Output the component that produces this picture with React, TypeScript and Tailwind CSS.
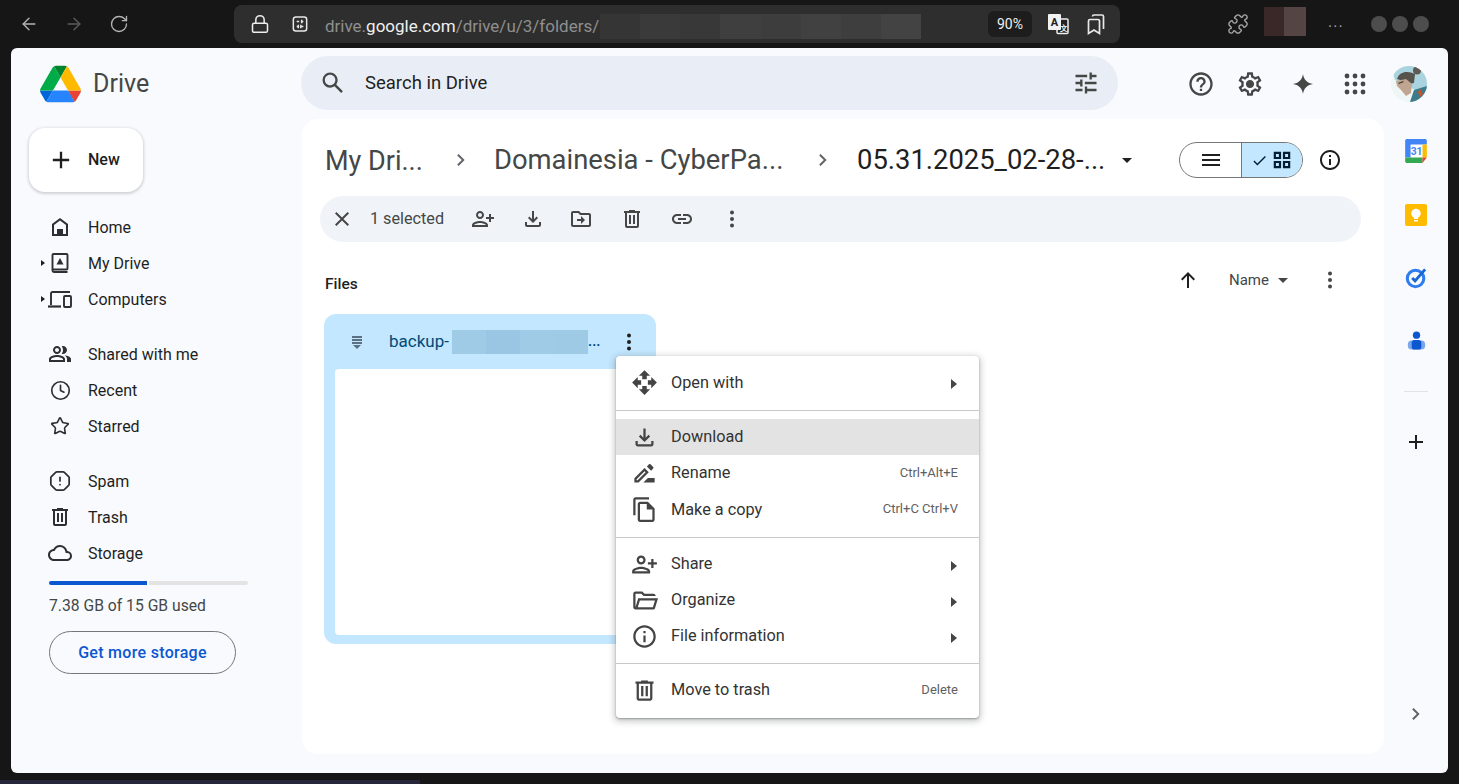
import type { ReactNode } from "react";
import { ArrowLeft, ArrowRight, Clock, Lock, OctagonAlert, Puzzle, RotateCw, Star } from "lucide-react";

const paths = {
  search: "M20.49 19l-5.73-5.73C15.53 12.2 16 10.91 16 9.5A6.5 6.5 0 1 0 9.5 16c1.41 0 2.7-.47 3.77-1.24L19 20.49 20.49 19zM5 9.5C5 7.01 7.01 5 9.5 5S14 7.01 14 9.5 11.99 14 9.5 14 5 11.99 5 9.5z",
  tune: "M3 17v2h6v-2H3zM3 5v2h10V5H3zm10 16v-2h8v-2h-8v-2h-2v6h2zM7 9v2H3v2h4v2h2V9H7zm14 4v-2H11v2h10zm-6-4h2V7h4V5h-4V3h-2v6z",
  help: "M11 18h2v-2h-2v2zm1-16C6.48 2 2 6.48 2 12s4.48 10 10 10 10-4.48 10-10S17.52 2 12 2zm0 18c-4.41 0-8-3.59-8-8s3.59-8 8-8 8 3.59 8 8-3.59 8-8 8zm0-14c-2.21 0-4 1.79-4 4h2c0-1.1.9-2 2-2s2 .9 2 2c0 2-3 1.75-3 5h2c0-2.25 3-2.5 3-5 0-2.21-1.79-4-4-4z",
  settings: "M19.43 12.98c.04-.32.07-.64.07-.98s-.03-.66-.07-.98l2.11-1.65c.19-.15.24-.42.12-.64l-2-3.46c-.12-.22-.39-.3-.61-.22l-2.49 1c-.52-.4-1.08-.73-1.69-.98l-.38-2.65C14.46 2.18 14.25 2 14 2h-4c-.25 0-.46.18-.49.42l-.38 2.65c-.61.25-1.17.59-1.69.98l-2.49-1c-.23-.09-.49 0-.61.22l-2 3.46c-.13.22-.07.49.12.64l2.11 1.65c-.04.32-.07.65-.07.98s.03.66.07.98l-2.11 1.65c-.19.15-.24.42-.12.64l2 3.46c.12.22.39.3.61.22l2.49-1c.52.4 1.08.73 1.69.98l.38 2.65c.03.24.24.42.49.42h4c.25 0 .46-.18.49-.42l.38-2.65c.61-.25 1.17-.59 1.69-.98l2.49 1c.23.09.49 0 .61-.22l2-3.46c.12-.22.07-.49-.12-.64l-2.11-1.65zm-1.98-1.71c.04.31.05.52.05.73 0 .21-.02.43-.05.73l-.14 1.13.89.7 1.08.84-.7 1.21-1.27-.51-1.04-.42-.9.68c-.43.32-.84.56-1.25.73l-1.06.43-.16 1.13-.2 1.35h-1.4l-.19-1.35-.16-1.13-1.06-.43c-.43-.18-.83-.41-1.23-.71l-.91-.7-1.06.43-1.27.51-.7-1.21 1.08-.84.89-.7-.14-1.13c-.03-.31-.05-.54-.05-.74s.02-.43.05-.73l.14-1.13-.89-.7-1.08-.84.7-1.21 1.27.51 1.04.42.9-.68c.43-.32.84-.56 1.25-.73l1.06-.43.16-1.13.2-1.35h1.39l.19 1.35.16 1.13 1.06.43c.43.18.83.41 1.23.71l.91.7 1.06-.43 1.27-.51.7 1.21-1.07.85-.89.7.14 1.13zM12 8.5c-1.93 0-3.5 1.57-3.5 3.5s1.57 3.5 3.5 3.5 3.5-1.57 3.5-3.5-1.57-3.5-3.5-3.5z",
  spark: "M12 2c.6 5.5 4.5 9.4 10 10-5.5.6-9.4 4.5-10 10-.6-5.5-4.5-9.4-10-10 5.5-.6 9.4-4.5 10-10z",
  home: "M4 21V9l8-6 8 6v12H4zm2-2h3v-5h6v5h3v-9l-6-4.5L6 10v9z",
  people: "M16.67 13.13C18.04 14.06 19 15.32 19 17v3h4v-3c0-2.18-3.57-3.47-6.33-3.87zM15 12c2.21 0 4-1.79 4-4s-1.79-4-4-4c-.47 0-.91.1-1.33.24C14.5 5.27 15 6.58 15 8s-.5 2.73-1.33 3.76c.42.14.86.24 1.33.24zM9 12c2.21 0 4-1.79 4-4s-1.79-4-4-4-4 1.79-4 4 1.79 4 4 4zm0-6c1.1 0 2 .9 2 2s-.9 2-2 2-2-.9-2-2 .9-2 2-2zM9 13c-2.67 0-8 1.34-8 4v3h16v-3c0-2.66-5.33-4-8-4zm6 5H3v-.99C3.2 16.29 6.3 15 9 15s5.8 1.29 6 2v1z",
  trash: "M15 4V3H9v1H4v2h1v13c0 1.1.9 2 2 2h10c1.1 0 2-.9 2-2V6h1V4h-5zm2 15H7V6h10v13zM9 8h2v9H9zm4 0h2v9h-2z",
  cloud: "M12 6c2.62 0 4.88 1.86 5.39 4.43l.3 1.5 1.53.11A2.98 2.98 0 0 1 22 15c0 1.65-1.35 3-3 3H6c-2.21 0-4-1.79-4-4 0-2.05 1.53-3.76 3.56-3.97l1.07-.11.5-.95A5.469 5.469 0 0 1 12 6m0-2C9.11 4 6.6 5.64 5.35 8.04 2.34 8.36 0 10.91 0 14c0 3.31 2.69 6 6 6h13c2.76 0 5-2.24 5-5 0-2.64-2.05-4.78-4.65-4.96A7.49 7.49 0 0 0 12 4z",
  close: "M19 6.41L17.59 5 12 10.59 6.41 5 5 6.41 10.59 12 5 17.59 6.41 19 12 13.41 17.59 19 19 17.59 13.41 12z",
  personAdd: "M9 12c2.21 0 4-1.79 4-4s-1.79-4-4-4-4 1.79-4 4 1.79 4 4 4zm0-6c1.1 0 2 .9 2 2s-.9 2-2 2-2-.9-2-2 .9-2 2-2zm0 8c-2.67 0-8 1.34-8 4v2h16v-2c0-2.66-5.33-4-8-4zm-6 4c.2-.72 3.3-2 6-2s5.8 1.28 6 2H3zm17-3v-3h3v-2h-3V7h-2v3h-3v2h3v3h2z",
  download: "M18 15v3H6v-3H4v3c0 1.1.9 2 2 2h12c1.1 0 2-.9 2-2v-3h-2zm-1-4l-1.41-1.41L13 12.17V4h-2v8.17L8.41 9.59 7 11l5 5 5-5z",
  move: "M20 6h-8l-2-2H4c-1.1 0-1.99.9-1.99 2L2 18c0 1.1.9 2 2 2h16c1.1 0 2-.9 2-2V8c0-1.1-.9-2-2-2zm0 12H4V6h5.17l2 2H20v10zm-8-4H8v-2h4V9l4 4-4 4v-3z",
  link: "M17 7h-4v2h4c1.65 0 3 1.35 3 3s-1.35 3-3 3h-4v2h4c2.76 0 5-2.24 5-5s-2.24-5-5-5zm-6 8H7c-1.65 0-3-1.35-3-3s1.35-3 3-3h4V7H7c-2.76 0-5 2.24-5 5s2.24 5 5 5h4v-2zm-3-4h8v2H8z",
  info: "M11 7h2v2h-2zm0 4h2v6h-2zm1-9C6.48 2 2 6.48 2 12s4.48 10 10 10 10-4.48 10-10S17.52 2 12 2zm0 18c-4.41 0-8-3.59-8-8s3.59-8 8-8 8 3.59 8 8-3.59 8-8 8z",
  openWith: "M10 9h4V6h3l-5-5-5 5h3v3zm-1 1H6V7l-5 5 5 5v-3h3v-4zm14 2l-5-5v3h-3v4h3v3l5-5zm-9 3h-4v3H7l5 5 5-5h-3v-3z",
  rename: "M15 16l-4 4h10v-4h-6zm-2.94-8.81L3 16.25V20h3.75l9.06-9.06-3.75-3.75zM5.92 18H5v-.92l7.06-7.06.92.92L5.92 18zm13.79-10.37c.39-.39.39-1.02 0-1.41l-2.34-2.34a.996.996 0 0 0-1.41 0l-1.83 1.83 3.75 3.75 1.83-1.83z",
  copy: "M16 1H4c-1.1 0-2 .9-2 2v14h2V3h12V1zm-1 4H8c-1.1 0-1.99.9-1.99 2L6 21c0 1.1.89 2 1.99 2H19c1.1 0 2-.9 2-2V11l-6-6zM8 21V7h6v5h5v9H8z",
  folderOpen: "M4 20c-1.1 0-2-.9-2-2V6c0-1.1.9-2 2-2h6l2 2h8c1.1 0 2 .9 2 2H11.17l-2-2H4v12l2.4-8H24l-2.6 8.6c-.26.84-1.03 1.4-1.9 1.4H4zm3.9-8L6 18h13.5l1.8-6H7.9z",
  menu: "M3 18h18v-2H3v2zm0-5h18v-2H3v2zm0-7v2h18V6H3z",
  plus: "M19 13h-6v6h-2v-6H5v-2h6V5h2v6h6v2z",
  up: "M12 4l-7 7 1.41 1.41L11 7.83V20h2V7.83l4.59 4.58L19 11z",
  check: "M9 16.17L4.83 12l-1.42 1.41L9 19 21 7l-1.41-1.41z",
  grid: "M3 3h8v8H3zm2.4 2.4v3.2h3.2V5.4zM13 3h8v8h-8zm2.4 2.4v3.2h3.2V5.4zM3 13h8v8H3zm2.4 2.4v3.2h3.2v-3.2zM13 13h8v8h-8zm2.4 2.4v3.2h3.2v-3.2z",
  chevron: "M9.6 6L8.2 7.4 12.8 12l-4.6 4.6L9.6 18l6-6z",
};

const Mi = ({ d, className = "w-6 h-6" }: { d: string; className?: string }) => (
  <svg viewBox="0 0 24 24" fill="currentColor" fillRule="evenodd" className={`shrink-0 ${className}`}>
    <path d={d} />
  </svg>
);

const Dots = ({ className = "w-6 h-6" }: { className?: string }) => (
  <svg viewBox="0 0 24 24" fill="currentColor" className={`shrink-0 ${className}`}>
    <circle cx="12" cy="5.5" r="2" />
    <circle cx="12" cy="12" r="2" />
    <circle cx="12" cy="18.5" r="2" />
  </svg>
);

const Apps = () => (
  <svg viewBox="0 0 24 24" fill="currentColor" className="w-6 h-6">
    {[4, 12, 20].flatMap((y) => [4, 12, 20].map((x) => <circle key={`${x}-${y}`} cx={x} cy={y} r="2.4" />))}
  </svg>
);

const Caret = ({ className = "" }: { className?: string }) => (
  <span className={`block w-0 h-0 border-x-[5px] border-x-transparent border-t-[5px] ${className}`} />
);

const SideCaret = () => <span className="block w-0 h-0 border-y-[5px] border-y-transparent border-l-[6px] border-l-[#444746]" />;

const DriveLogo = () => (
  <svg viewBox="0 0 87.3 78" className="w-[41px] h-[38px]">
    <path d="m6.6 66.85 3.85 6.65c.8 1.4 1.95 2.5 3.3 3.3l13.75-23.8h-27.5c0 1.55.4 3.1 1.2 4.5z" fill="#0066da" />
    <path d="m43.65 25-13.75-23.8c-1.35.8-2.5 1.9-3.3 3.3l-25.4 44a9.06 9.06 0 0 0 -1.2 4.5h27.5z" fill="#00ac47" />
    <path d="m73.55 76.8c1.35-.8 2.5-1.9 3.3-3.3l1.6-2.75 7.65-13.25c.8-1.4 1.2-2.95 1.2-4.5h-27.502l5.852 11.5z" fill="#ea4335" />
    <path d="m43.65 25 13.75-23.8c-1.35-.8-2.9-1.2-4.5-1.2h-18.5c-1.6 0-3.15.45-4.5 1.2z" fill="#00832d" />
    <path d="m59.8 53h-32.3l-13.75 23.8c1.35.8 2.9 1.2 4.5 1.2h50.8c1.6 0 3.15-.45 4.5-1.2z" fill="#2684fc" />
    <path d="m73.4 26.5-12.7-22c-.8-1.4-1.95-2.5-3.3-3.3l-13.75 23.8 16.15 28h27.45c0-1.55-.4-3.1-1.2-4.5z" fill="#ffba00" />
  </svg>
);

const MyDriveIcon = () => (
  <svg viewBox="0 0 24 24" fill="none" stroke="currentColor" strokeWidth="1.9" className="w-6 h-6">
    <rect x="4.5" y="3" width="15" height="15.5" rx="1" />
    <path d="M4.5 18v1.5a1.5 1.5 0 0 0 1.5 1.5h13.5" />
    <path d="M12 7l3.5 6.5h-7z" fill="currentColor" stroke="none" />
  </svg>
);

const ComputersIcon = () => (
  <svg viewBox="0 0 24 24" fill="none" stroke="currentColor" strokeWidth="1.9" className="w-6 h-6">
    <path d="M3 18V6.5A1.5 1.5 0 0 1 4.5 5H22" />
    <path d="M0 19.5h13" strokeWidth="2.2" />
    <rect x="16" y="9" width="7" height="11" rx="1" />
  </svg>
);

const Avatar = () => (
  <svg viewBox="0 0 36 36" className="w-9 h-9 rounded-full">
    <rect width="36" height="36" fill="#eef6f6" />
    <path d="M0 0h36v24H24L4 14z" fill="#a9d3de" />
    <path d="M19 36l4-12 13-4v16z" fill="#3d7a8a" />
    <path d="M29 23l3 5-3 3-2-5z" fill="#c4552c" />
    <circle cx="26" cy="4.5" r="4" fill="#5f5a54" />
    <path d="M6 13C8 6 16 4 24 8l-1 9-5 1-6-3z" fill="#56524c" />
    <path d="M5 15l10-2 6 5-1 9-5 3-5-6-4-4z" fill="#c0a690" />
    <path d="M7 17l5-2 1 1-5 2z" fill="#4a443e" />
  </svg>
);

const CalendarIcon = () => (
  <svg viewBox="0 0 24 24" className="w-[26px] h-[26px]">
    <path d="M2 1.5h20v21H2z" fill="#fff" />
    <path d="M3 1h18l1 1v4H7v12H2V2z" fill="#4285f4" />
    <path d="M18 6h4v12h-4z" fill="#fbbc04" />
    <path d="M2 18h16v5H3l-1-1z" fill="#34a853" />
    <path d="M18 18h4l-4 5z" fill="#ea4335" />
    <text x="12.5" y="16" textAnchor="middle" fontSize="9.5" fontWeight="700" fill="#4285f4" fontFamily="Roboto, sans-serif">31</text>
  </svg>
);

const KeepIcon = () => (
  <svg viewBox="0 0 24 24" className="w-[24px] h-[24px]">
    <rect x="1" y="1" width="22" height="22" rx="2" fill="#ffbb00" />
    <circle cx="12" cy="10.5" r="4.7" fill="#fff" />
    <path d="M10 14h4v2h-4zM10 17h4v1.4h-4z" fill="#fff" />
  </svg>
);

const TasksIcon = () => (
  <svg viewBox="0 0 24 24" className="w-[23px] h-[23px]" fill="none">
    <circle cx="11" cy="13" r="8.6" stroke="#2f7cf0" strokeWidth="3.2" />
    <path d="M7.5 12.5l3 3L21 3.5" stroke="#1967d2" strokeWidth="3" />
  </svg>
);

const ContactsIcon = () => (
  <svg viewBox="0 0 24 24" className="w-[23px] h-[23px]">
    <circle cx="12" cy="6.5" r="3.8" fill="#0b57d0" />
    <rect x="3" y="12" width="18" height="9.5" rx="4" fill="#7aa7ea" />
    <rect x="7" y="11.5" width="10" height="10" rx="3" fill="#0b57d0" />
  </svg>
);

const SiteIcon = () => (
  <svg viewBox="0 0 24 24" fill="none" stroke="#e8e8e8" strokeWidth="1.8" className="w-5 h-5">
    <rect x="4" y="3.5" width="16" height="17" rx="3" />
    <path d="M8 9h3M14 7v4M14 9h2M8 15h2M13 13v4M10 13v4M13 15h3" />
  </svg>
);

const TranslateIcon = () => (
  <svg viewBox="0 0 24 24" className="w-6 h-6">
    <rect x="11" y="7" width="11" height="14.5" rx="1" fill="#222" stroke="#eee" strokeWidth="1.5" />
    <rect x="2" y="2" width="13" height="16" rx="1" fill="#f2f2f2" />
    <text x="8.5" y="14" textAnchor="middle" fontSize="11" fontWeight="700" fill="#222" fontFamily="Roboto, sans-serif">A</text>
    <text x="17.5" y="18.5" textAnchor="middle" fontSize="8" fontWeight="700" fill="#eee" fontFamily="Roboto, sans-serif">文</text>
  </svg>
);

const CollectionsIcon = () => (
  <svg viewBox="0 0 24 24" fill="none" stroke="#e8e8e8" strokeWidth="1.7" className="w-6 h-6">
    <path d="M4.5 9a1.5 1.5 0 0 1 1.5-1.5h8A1.5 1.5 0 0 1 15.5 9v12.5L10 18l-5.5 3.5z" />
    <path d="M8.5 4.5a1.5 1.5 0 0 1 1.5-1.5h8a1.5 1.5 0 0 1 1.5 1.5V17" />
  </svg>
);

const urlBlur = ["bg-[#353535]", "bg-[#3a3a3a]", "bg-[#383838]", "bg-[#3f3f3f]", "bg-[#3d3d3d]", "bg-[#414141]", "bg-[#3e3e3e]", "bg-[#434343]"];

const navGroups: { label: string; icon: ReactNode; caret?: boolean }[][] = [
  [
    { label: "Home", icon: <Mi d={paths.home} /> },
    { label: "My Drive", icon: <MyDriveIcon />, caret: true },
    { label: "Computers", icon: <ComputersIcon />, caret: true },
  ],
  [
    { label: "Shared with me", icon: <Mi d={paths.people} /> },
    { label: "Recent", icon: <Clock className="w-[21px] h-[21px] ml-[2px]" strokeWidth={1.9} /> },
    { label: "Starred", icon: <Star className="w-[20px] h-[20px] ml-[2px]" strokeWidth={1.9} /> },
  ],
  [
    { label: "Spam", icon: <OctagonAlert className="w-[22px] h-[22px] mx-px" strokeWidth={1.9} /> },
    { label: "Trash", icon: <Mi d={paths.trash} /> },
    { label: "Storage", icon: <Mi d={paths.cloud} /> },
  ],
];

const menuGroups: { gap: string; items: { label: string; d: string; hint?: string; sub?: boolean; active?: boolean; low?: boolean }[] }[] = [
  { gap: "", items: [{ label: "Open with", d: paths.openWith, sub: true, low: true }] },
  {
    gap: "mt-[10px] border-t border-[#c9c9c9] pt-2",
    items: [
      { label: "Download", d: paths.download, active: true },
      { label: "Rename", d: paths.rename, hint: "Ctrl+Alt+E" },
      { label: "Make a copy", d: paths.copy, hint: "Ctrl+C Ctrl+V", low: true },
    ],
  },
  {
    gap: "mt-[10px] border-t border-[#c9c9c9] pt-2",
    items: [
      { label: "Share", d: paths.personAdd, sub: true },
      { label: "Organize", d: paths.folderOpen, sub: true },
      { label: "File information", d: paths.info, sub: true },
    ],
  },
  { gap: "mt-[9px] border-t border-[#c9c9c9] pt-2", items: [{ label: "Move to trash", d: paths.trash, hint: "Delete" }] },
];

const TopBar = () => (
  <div className="flex items-start h-12 text-[#d0d0d0]">
    <div className="flex items-center h-[48px] pl-[19px] gap-[12px] w-[234px]">
      <ArrowLeft className="w-5 h-5 text-[#b5b5b5]" strokeWidth={1.6} />
      <ArrowRight className="w-5 h-5 ml-[13px] text-[#5c5c5c]" strokeWidth={1.6} />
      <RotateCw className="w-5 h-5 ml-[13px] text-[#b5b5b5]" strokeWidth={1.6} />
    </div>
    <div className="flex items-center mt-[5px] h-[38px] w-[886px] rounded-lg bg-[#2e2e2e] pl-[16px]">
      <Lock className="w-5 h-5 text-[#eeeeee]" strokeWidth={1.8} />
      <span className="ml-[20px]"><SiteIcon /></span>
      <div className="ml-[15px] mt-[5px] text-[17px] w-[275px] whitespace-nowrap text-[#8f8f8f]">
        drive.<span className="text-[#f0f0f0]">google.com</span>/drive/u/3/folders/
      </div>
      <div className="flex h-[25px] w-[321px] mt-[5px]">
        {urlBlur.map((c, i) => <div key={i} className={`flex-1 ${c}`} />)}
      </div>
      <div className="ml-[67px] flex items-center justify-center w-[44px] h-[26px] rounded-md bg-[#1d1d1d] text-[14px] text-[#eeeeee]">90%</div>
      <span className="ml-[14px]"><TranslateIcon /></span>
      <span className="ml-[14px]"><CollectionsIcon /></span>
    </div>
    <div className="flex items-center h-[48px] ml-[107px]">
      <Puzzle className="w-[22px] h-[22px] text-[#a8a8a8]" strokeWidth={1.5} />
      <div className="flex h-[29px] w-[42px] ml-[15px] mb-[5px]">
        <div className="w-[20px] bg-[#3a2828]" />
        <div className="flex-1 bg-[#544444]" />
      </div>
      <span className="ml-[22px] w-[14px] text-center text-[16px] leading-none tracking-[1px] text-[#a0a0a0] -mt-[4px]">...</span>
      <div className="ml-[29px] flex gap-[5px]">
        <span className="w-4 h-4 rounded-full bg-[#4d4d4d]" />
        <span className="w-4 h-4 rounded-full bg-[#4d4d4d]" />
        <span className="w-4 h-4 rounded-full bg-[#4d4d4d]" />
      </div>
    </div>
  </div>
);

const Header = () => (
  <header className="flex items-center h-[71px]">
    <div className="flex items-center w-[290px] pl-[29px]">
      <DriveLogo />
      <span className="ml-[12px] mt-px text-[25px] text-[#444746]">Drive</span>
    </div>
    <div className="flex items-center w-[817px] h-[54px] -mt-[1px] rounded-full bg-[#e9eef6] pl-[18px] pr-[18px]">
      <Mi d={paths.search} className="w-7 h-7 text-[#444746]" />
      <span className="ml-[18px] mt-[2px] text-[18.5px] text-[#1f1f1f]">Search in Drive</span>
      <Mi d={paths.tune} className="ml-auto w-7 h-7 text-[#444746]" />
    </div>
    <div className="flex items-center ml-[69px] text-[#444746]">
      <Mi d={paths.help} className="w-7 h-7" />
      <Mi d={paths.settings} className="ml-[21px] w-7 h-7" />
      <Mi d={paths.spark} className="ml-[27px] w-6 h-6" />
      <span className="ml-[28px]"><Apps /></span>
      <span className="ml-[24px]"><Avatar /></span>
    </div>
  </header>
);

const Sidebar = () => (
  <aside className="w-[291px] shrink-0 pt-[9px] text-[16px] text-[#1f1f1f]">
    <button className="ml-[18px] flex items-center w-[114px] h-[64px] rounded-2xl bg-white pl-[19px] shadow-[0_1px_3px_1px_rgba(0,0,0,0.16)]">
      <Mi d={paths.plus} className="w-7 h-7 -ml-[1px]" />
      <span className="ml-[13px] font-medium">New</span>
    </button>
    <nav className="pt-[17px] flex flex-col gap-[19px] pl-[28px]">
      {navGroups.map((group, i) => (
        <div key={i}>
          {group.map((item) => (
            <div key={item.label} className="flex items-center h-9">
              <span className="w-[9px] flex items-center">{item.caret && <span className="block w-0 h-0 border-y-[3.5px] border-y-transparent border-l-[4px] border-l-[#1f1f1f] ml-[2px]" />}</span>
              <span className="flex w-6 text-[#2d2f31]">{item.icon}</span>
              <span className="ml-4 mt-px">{item.label}</span>
            </div>
          ))}
        </div>
      ))}
    </nav>
    <div className="ml-[38px] w-[199px] mt-[10px] flex h-1 gap-[2px]">
      <div className="w-[98px] rounded-l-full bg-[#0b57d0]" />
      <div className="flex-1 rounded-r-full bg-[#e3e3e3]" />
    </div>
    <div className="ml-[38px] mt-[11px] h-5 leading-5 text-[15.7px] text-[#444746]">7.38 GB of 15 GB used</div>
    <button className="ml-[38px] mt-[15px] w-[187px] h-[43px] rounded-full border border-[#747775] text-[16px] tracking-[0.3px] font-medium text-[#0b57d0]">Get more storage</button>
  </aside>
);

const SelectionBar = () => (
  <div className="ml-[18px] mr-[23px] mt-[18px] h-[46px] flex items-center rounded-full bg-[#f0f4f9] pl-[10px] text-[#444746]">
    <Mi d={paths.close} />
    <span className="ml-4 text-[16.2px] w-[74px] whitespace-nowrap">1 selected</span>
    <div className="ml-[27px] flex items-center gap-[26px]">
      <Mi d={paths.personAdd} />
      <Mi d={paths.download} />
      <Mi d={paths.move} className="-ml-[2px] w-6 h-6" />
      <Mi d={paths.trash} className="ml-px w-6 h-6" />
      <Mi d={paths.link} />
      <Dots />
    </div>
  </div>
);

const Main = () => (
  <main className="w-[1082px] h-[635px] rounded-2xl bg-white pt-[23px]">
    <div className="flex items-center h-9 pl-[23px] pr-[42px] text-[27.4px] text-[#444746]">
      <span className="w-[97px] mt-[2px] text-[27px] whitespace-nowrap">My Dri...</span>
      <Mi d={paths.chevron} className="ml-[27px] w-6 h-6 text-[#5f6368]" />
      <span className="ml-[21px] mt-[2px] w-[290px] whitespace-nowrap">Domainesia - CyberPa...</span>
      <Mi d={paths.chevron} className="ml-[27px] w-6 h-6 text-[#5f6368]" />
      <span className="ml-[22px] mt-[2px] w-[247px] whitespace-nowrap text-[#1f1f1f]">05.31.2025_02-28-...</span>
      <span className="ml-[18px] w-[24px]"><Caret className="border-t-[#1f1f1f]" /></span>
      <div className="ml-auto flex h-9 w-[124px] rounded-full border border-[#747775] overflow-hidden">
        <div className="w-[62px] flex items-center justify-center border-r-[1.5px] border-[#747775] text-[#1f1f1f]">
          <Mi d={paths.menu} />
        </div>
        <div className="flex-1 flex items-center justify-center bg-[#c2e7ff] text-[#001d35]">
          <Mi d={paths.check} className="w-[17px] h-[17px]" />
          <Mi d={paths.grid} className="w-[22px] h-[22px] ml-[3px]" />
        </div>
      </div>
      <Mi d={paths.info} className="ml-[15px] w-6 h-6 text-[#1f1f1f]" />
    </div>
    <SelectionBar />
    <div className="mt-5 flex items-start h-9 pl-[23px] pr-[42px] text-[#444746]">
      <span className="mt-3 text-[15.5px] font-medium text-[#1f1f1f] leading-5">Files</span>
      <div className="ml-auto flex items-center h-9">
        <Mi d={paths.up} className="w-6 h-6 text-[#1f1f1f]" />
        <span className="ml-[29px] w-10 text-[15px]">Name</span>
        <Caret className="ml-[9px] border-t-[#444746]" />
        <Dots className="ml-[30px] w-6 h-6" />
      </div>
    </div>
    <div className="ml-[22px] mt-4 w-[332px] h-[330px] rounded-xl bg-[#c2e7ff] flex flex-col">
      <div className="flex items-center h-[55px] text-[17px] text-[#004a77]">
        <svg viewBox="0 0 16 16" fill="#5b7183" className="w-4 h-4 ml-[25px]">
          <path d="M3 2h10v2H3zM3 5h10v2H3zM3 8h10v2H3zM4 11h8l-4 4z" />
        </svg>
        <span className="ml-6 w-[63px] whitespace-nowrap">backup-</span>
        <div className="w-[136px] h-6 flex">
          <div className="flex-1 bg-[#a0cbe6]" />
          <div className="flex-1 bg-[#9ac5e3]" />
          <div className="flex-1 bg-[#a0cbe6]" />
          <div className="flex-1 bg-[#9ecae5]" />
        </div>
        <span className="w-[13px] text-[15px] font-medium leading-none">...</span>
        <Dots className="ml-4 w-6 h-6 text-[#1f1f1f]" />
      </div>
      <div className="mx-[11px] h-[266px] rounded bg-white" />
    </div>
  </main>
);

const RightRail = () => (
  <aside className="flex-1 flex flex-col items-center h-[635px] pb-[28px]">
    <div className="flex items-center justify-center h-16"><CalendarIcon /></div>
    <div className="flex items-center justify-center h-[63px]"><KeepIcon /></div>
    <div className="flex items-center justify-center h-[62px]"><TasksIcon /></div>
    <div className="flex items-center justify-center h-16"><ContactsIcon /></div>
    <div className="mt-[19px] w-[24px] h-px bg-[#e3e3e3]" />
    <Mi d={paths.plus} className="mt-[38px] w-6 h-6 text-[#1f1f1f]" />
    <Mi d={paths.chevron} className="mt-auto w-6 h-6 text-[#5f6368]" />
  </aside>
);

const ContextMenu = () => (
  <div className="absolute left-[616px] top-[356px] w-[363px] h-[362px] rounded bg-white pt-2 text-[16.3px] text-[#333333] shadow-[0_2px_6px_2px_rgba(60,64,67,0.25),0_1px_2px_rgba(60,64,67,0.4)]">
    {menuGroups.map((group) => (
      <div key={group.items[0].label} className={group.gap}>
        {group.items.map((item) => (
          <div key={item.label} className={`flex items-center h-9 pl-4 pr-[21px] ${item.active ? "bg-[#e3e3e3]" : ""}`}>
            <span className="flex justify-center w-6">
              <Mi d={item.d} className="w-[27px] h-[27px] text-[#444444]" />
            </span>
            <span className={`ml-[15px] ${item.low ? "mt-[3px]" : "mt-px"}`}>{item.label}</span>
            {item.hint && <span className="ml-auto text-[13px] text-[#5f5f5f]">{item.hint}</span>}
            {item.sub && <span className="ml-auto mr-[1px] mt-[3px]"><SideCaret /></span>}
          </div>
        ))}
      </div>
    ))}
  </div>
);

export default function App() {
  return (
    <div className="relative w-[1459px] h-[784px] overflow-hidden bg-[#161616] font-['Roboto',sans-serif]">
      <TopBar />
      <div className="mx-[11px] h-[725px] rounded-md bg-[#f8fafd]">
        <Header />
        <div className="flex">
          <Sidebar />
          <Main />
          <RightRail />
        </div>
      </div>
      <div className="mt-[7px] h-[4px] w-[420px] bg-[#26263a]" />
      <ContextMenu />
    </div>
  );
}
